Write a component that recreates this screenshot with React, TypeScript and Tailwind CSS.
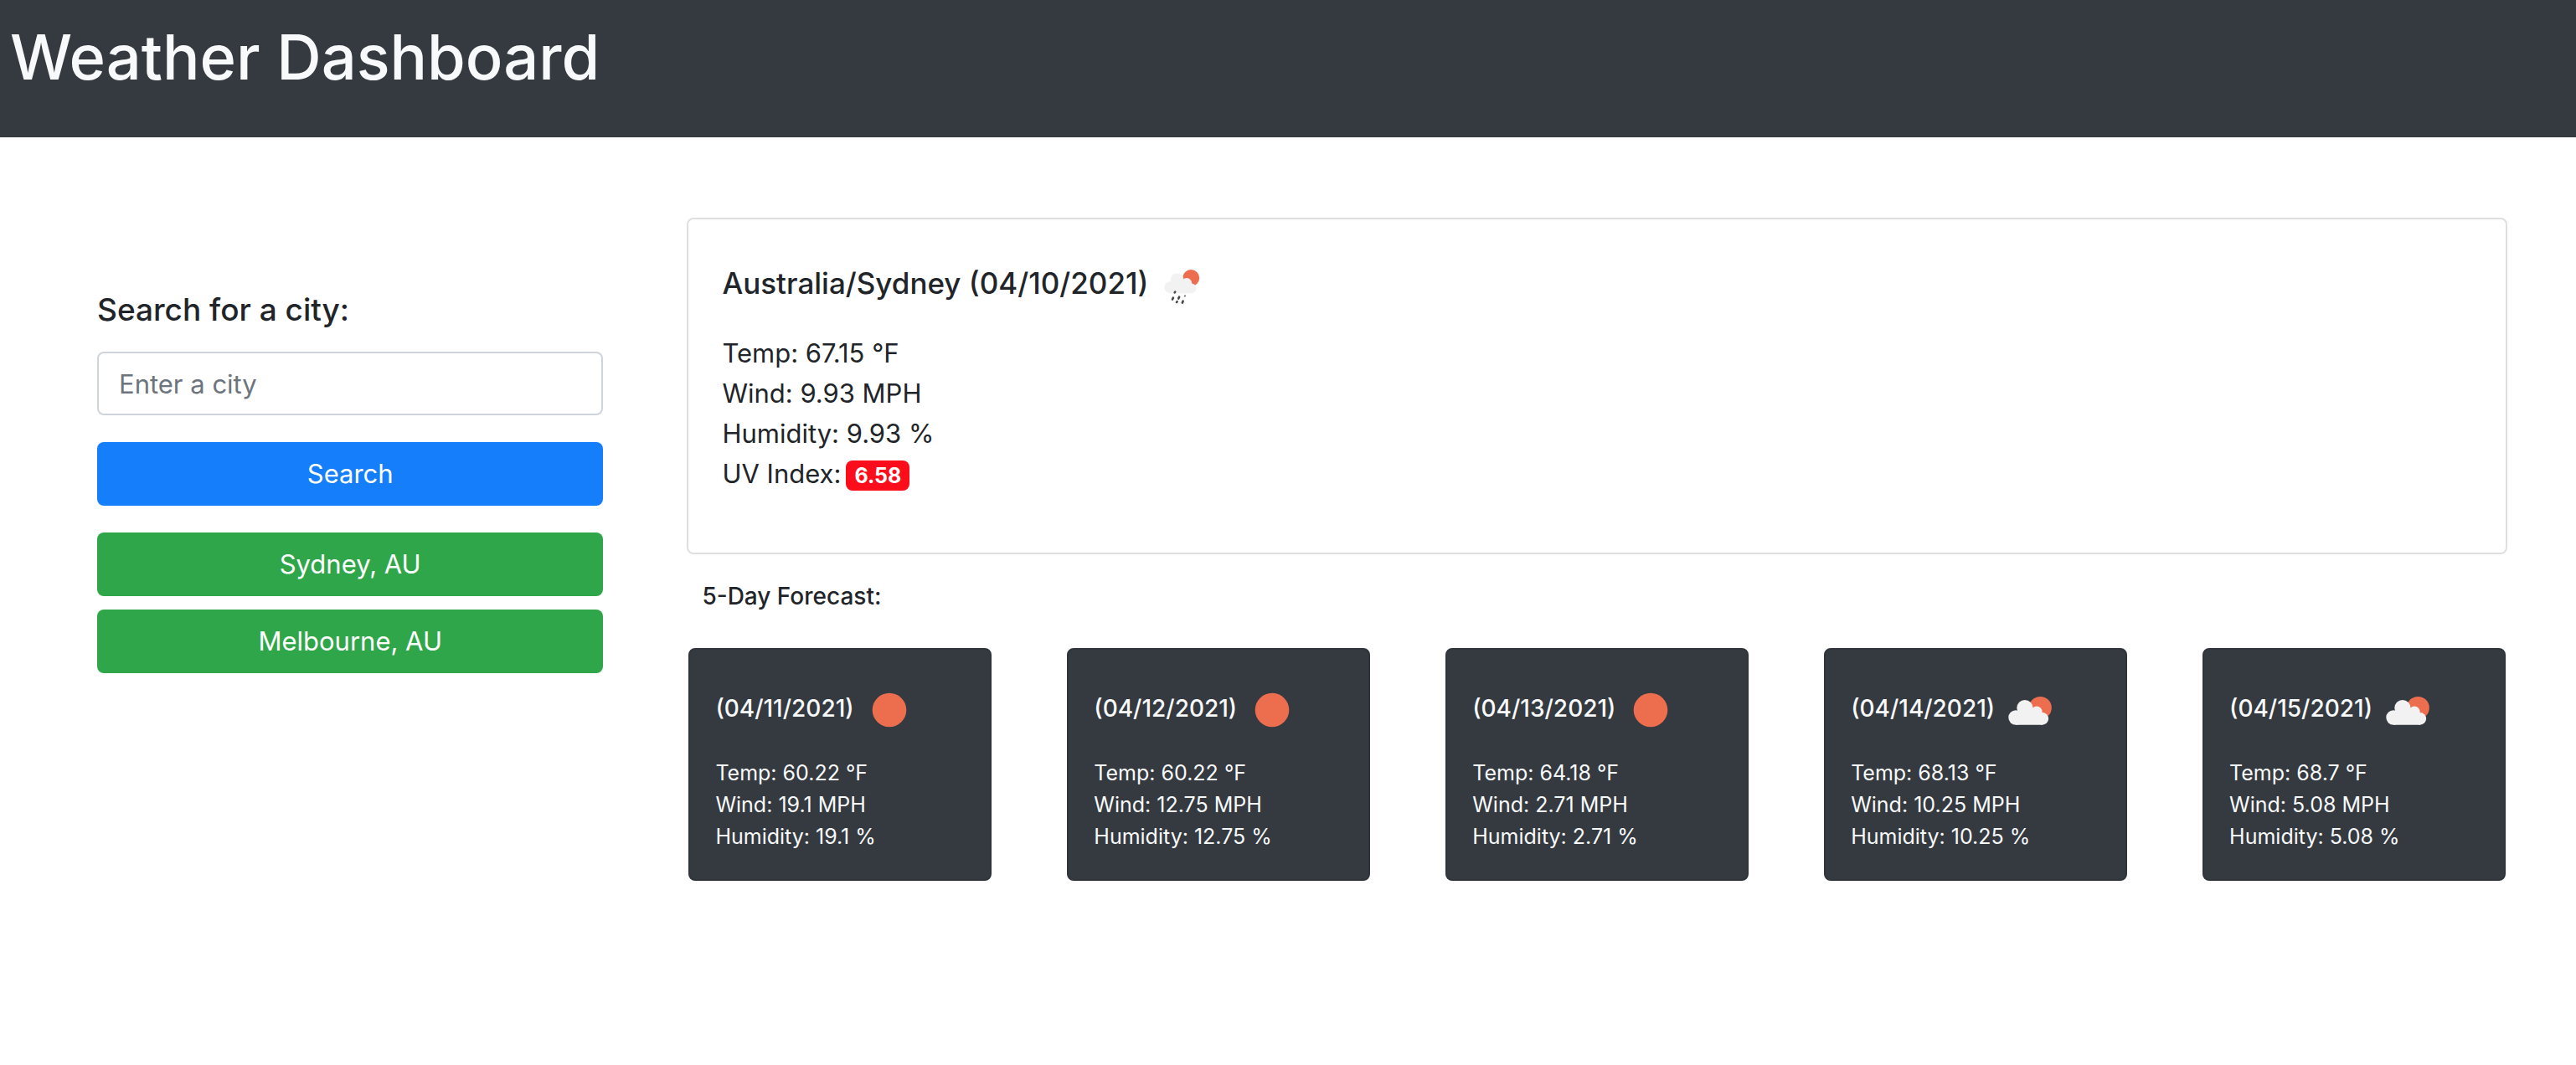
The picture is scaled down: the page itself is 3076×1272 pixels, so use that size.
import React from "react";

type IconKind = "sun" | "cloud" | "rain";

const days: { date: string; icon: IconKind; temp: string; wind: string }[] = [
  { date: "04/11/2021", icon: "sun", temp: "60.22", wind: "19.1" },
  { date: "04/12/2021", icon: "sun", temp: "60.22", wind: "12.75" },
  { date: "04/13/2021", icon: "sun", temp: "64.18", wind: "2.71" },
  { date: "04/14/2021", icon: "cloud", temp: "68.13", wind: "10.25" },
  { date: "04/15/2021", icon: "cloud", temp: "68.7", wind: "5.08" },
];

function WeatherIcon({ kind }: { kind: IconKind }) {
  return (
    <svg viewBox="0 0 80 80" className="size-20 shrink-0" aria-hidden="true">
      {kind === "sun" && <circle cx="40" cy="40" r="20.3" fill="#ec6e4f" />}
      {kind === "cloud" && (
        <>
          <circle cx="52.3" cy="37.4" r="13.5" fill="#ec6e4f" />
          <g fill="#f2f2f2">
            <circle cx="23" cy="49" r="8.7" />
            <circle cx="33.9" cy="37.6" r="9.6" />
            <circle cx="48" cy="42.2" r="6.6" />
            <circle cx="54.8" cy="50.4" r="7.3" />
            <path d="M23 57.7V45l10-7 15 4 7 8v7.7z" />
          </g>
        </>
      )}
      {kind === "rain" && (
        <>
          <circle cx="51.2" cy="30" r="10" fill="#ec6e4f" />
          <g fill="#f2f2f2">
            <circle cx="26.4" cy="41.2" r="7" />
            <circle cx="34.6" cy="32.4" r="8" />
            <circle cx="46" cy="36.3" r="6.2" />
            <circle cx="51.6" cy="42.4" r="5.8" />
            <path d="M26 48.2V38l8-6 12 4 6 6v6.2z" />
          </g>
          <g stroke="#484848" strokeWidth="2.6" strokeLinecap="round">
            <path d="M31.7 47.4l.5-.8M29 55.6l.9-2M36.2 54.6l.9-2M34 59l.6-.8M40.8 59.6l.9-2" />
            <path d="M43.8 51.6l.3-.4" stroke="#777" strokeWidth="2" />
          </g>
        </>
      )}
    </svg>
  );
}

export default function App() {
  return (
    <div className="min-h-screen bg-white font-['Inter',sans-serif] text-[#212529]">
      <header className="bg-[#343a40] px-3 pt-5 pb-12">
        <h1 className="text-[74px] leading-[96px] font-medium text-[#f8f9fa]">Weather Dashboard</h1>
      </header>

      <main className="flex items-start gap-[100px] pt-24 pr-[82px] pl-[116px]">
        <aside className="w-[21%] shrink-0 pt-[88px]">
          <form onSubmit={(e) => e.preventDefault()}>
            <label htmlFor="city" className="block text-[37px] leading-11 font-medium">
              Search for a city:
            </label>
            <input
              id="city"
              type="text"
              placeholder="Enter a city"
              className="mt-7 block h-[76px] w-full rounded-lg border-2 border-[#ced4da] px-6 text-[31px] placeholder:text-[#6c757d]"
            />
            <button type="submit" className="mt-8 block h-[76px] w-full rounded-lg bg-[#147efb] text-[31px] text-white">
              Search
            </button>
          </form>
          <div className="mt-8 flex flex-col gap-4">
            {["Sydney, AU", "Melbourne, AU"].map((city) => (
              <button key={city} type="button" className="h-[76px] w-full rounded-lg bg-[#30a64a] text-[31px] text-white">
                {city}
              </button>
            ))}
          </div>
        </aside>

        <section className="min-w-0 flex-1">
          <article className="rounded-lg border-2 border-[#dfdfdf] px-10 pt-10 pb-[70px]">
            <div className="flex items-center">
              <h2 className="pb-2 text-[35px] leading-[48px] font-medium">Australia/Sydney (04/10/2021)</h2>
              <WeatherIcon kind="rain" />
            </div>
            <div className="mt-4 text-[31px] leading-[48px]">
              <p>Temp: 67.15 °F</p>
              <p>Wind: 9.93 MPH</p>
              <p>Humidity: 9.93 %</p>
              <p className="flex items-center gap-1.5">
                UV Index:
                <span className="mt-1 rounded-lg bg-[#fc0d1b] px-2.5 text-[25px] leading-[36px] font-bold text-white">6.58</span>
              </p>
            </div>
          </article>

          <h3 className="mt-8 pl-[18px] text-[28px] leading-9 font-medium">5-Day Forecast:</h3>

          <div className="mt-11 grid grid-cols-5 gap-[90px] px-0.5">
            {days.map((d) => (
              <article key={d.date} className="rounded-lg border-2 border-[#30353b] bg-[#343a40] px-[30px] py-8 text-[#f8f9fa]">
                <div className="flex items-center gap-0.5">
                  <h4 className="pb-1 text-[28px] leading-[38px] font-medium">({d.date})</h4>
                  <WeatherIcon kind={d.icon} />
                </div>
                <div className="mt-4 text-[25px] leading-[38px]">
                  <p>Temp: {d.temp} °F</p>
                  <p>Wind: {d.wind} MPH</p>
                  <p>Humidity: {d.wind} %</p>
                </div>
              </article>
            ))}
          </div>
        </section>
      </main>
    </div>
  );
}
